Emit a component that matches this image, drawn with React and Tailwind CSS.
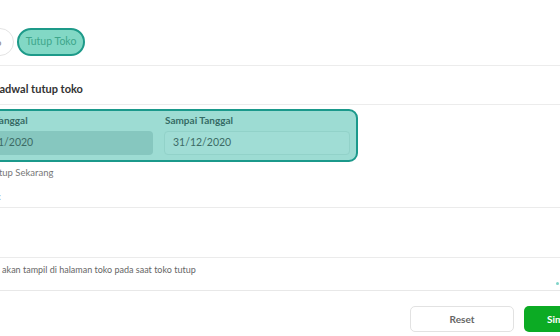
export default function App() {
  return (
    <div className="w-[560px] h-[336px] overflow-hidden bg-white font-['Lato',sans-serif]">
      <div className="-ml-[60px] w-[620px]">
        {/* tabs */}
        <div className="pt-[28px] pl-[4px] flex gap-[3px]">
          <div className="w-[70px] h-[28px] shrink-0 rounded-full border border-[#e3e3e3] flex items-center justify-center text-[10px] text-[#888]">
            Buka Toko
          </div>
          <div className="w-[68px] h-[28px] shrink-0 rounded-full border-[2.5px] border-[#1d9a89] bg-[#82d8c5] flex items-center justify-center text-[10.5px] text-[#3ea68b]">
            Tutup Toko
          </div>
        </div>

        <div className="mt-[9px] border-t border-[#ececec]">
          <div className="pl-[55px] pt-[15px] pb-[8px] text-[11px] leading-[15px] font-bold text-[#333]">
            Jadwal tutup toko
          </div>
        </div>

        <div className="border-t border-[#ececec]">
          <div className="mt-[4px] ml-[20px] w-[398px] h-[53px] rounded-[9px] border-[2.5px] border-[#1b998b] bg-[#9ddcd3] px-[5px] pt-[2.5px] flex gap-[11px]">
            <div className="w-[186px] shrink-0">
              <div className="h-[12px] leading-[12px] text-[10px] font-bold text-[#356b65] pl-[6px]">
                Dari Tanggal
              </div>
              <div className="mt-[5px] h-[24px] rounded-[4px] bg-[#86c7bf] flex items-center pl-[8px] text-[10.5px] text-[#3d6b66]">
                01/01/2020
              </div>
            </div>
            <div className="w-[186px] shrink-0">
              <div className="h-[12px] leading-[12px] text-[10px] font-bold text-[#356b65] pl-[1px]">
                Sampai Tanggal
              </div>
              <div className="mt-[5px] h-[24px] rounded-[4px] bg-[#a0ddd5] border border-[#92d2c9] flex items-center pl-[8px] text-[10.5px] text-[#3d6b66]">
                31/12/2020
              </div>
            </div>
          </div>
        </div>

        <div className="mt-[5px] pl-[49px] h-[12px] leading-[12px] text-[9.5px] text-[#777]">
          Tutup Sekarang
        </div>
        <div className="mt-[12px] pl-[26px] h-[12px] leading-[12px] text-[9.5px] text-[#777]">
          Catatan:
        </div>

        <div className="mt-[4px] border-t border-[#ebebeb] h-[50px]" />
        <div className="border-t border-[#ebebeb] h-[33px] relative">
          <div className="pl-[29px] pt-[6px] text-[9px] leading-[12px] text-[#666]">
            Catatan akan tampil di halaman toko pada saat toko tutup
          </div>
          <div className="absolute right-[1px] bottom-[5px] w-[3px] h-[3px] bg-[#7fd4c8] rounded-full" />
        </div>
        <div className="border-t border-[#e8e8e8]" />

        <div className="mt-[15px] flex gap-[10px] pl-[470px]">
          <div className="w-[104px] h-[26px] shrink-0 rounded-[5px] border border-[#e2e2e2] bg-white flex items-center justify-center text-[10px] font-bold text-[#666]">
            Reset
          </div>
          <div className="w-[104px] h-[26px] shrink-0 rounded-[5px] bg-[#0cab24] flex items-center pl-[23px] text-[10px] font-bold text-white">
            Simpan
          </div>
        </div>
      </div>
    </div>
  );
}
